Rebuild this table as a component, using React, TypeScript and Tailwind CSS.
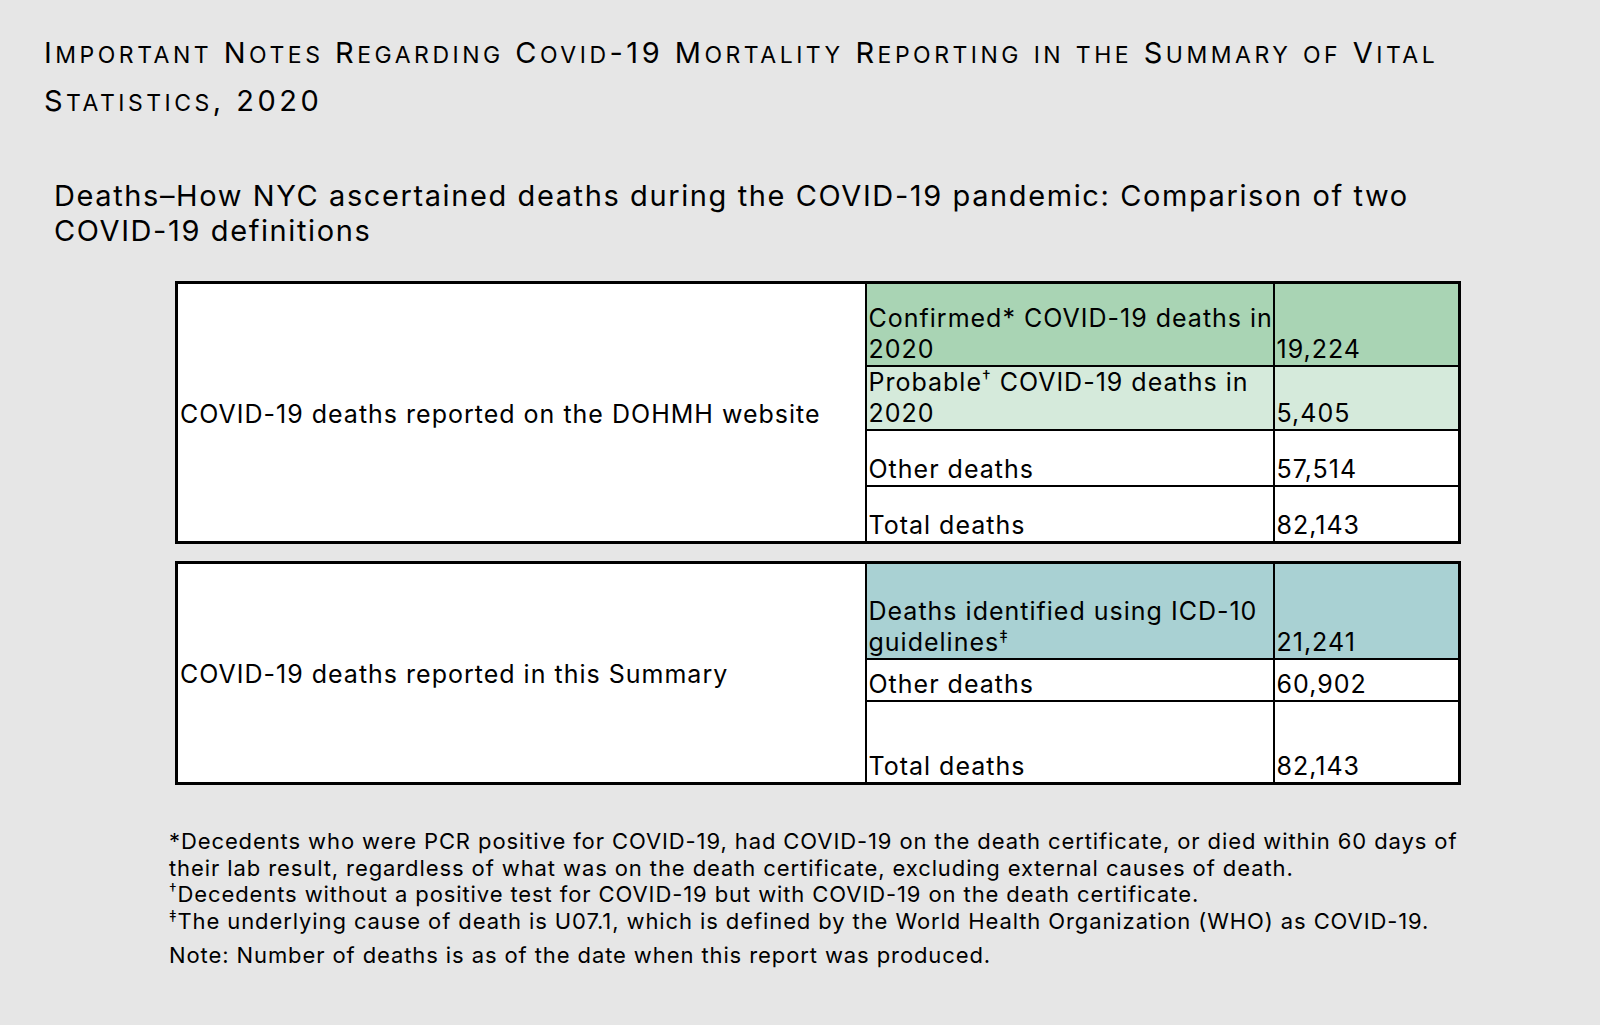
import React from "react";

const Sup = ({ c }: { c: string }) => (
  <span className="relative top-[-0.45em] text-[0.7em] leading-none">{c}</span>
);

function SmallCaps({ text }: { text: string }) {
  const parts: { small: boolean; s: string }[] = [];
  for (const ch of text) {
    const small = ch >= "a" && ch <= "z";
    const last = parts[parts.length - 1];
    if (last && last.small === small) last.s += ch;
    else parts.push({ small, s: ch });
  }
  return (
    <>
      {parts.map((p, i) =>
        p.small ? (
          <span key={i} className="text-[23px] uppercase">
            {p.s}
          </span>
        ) : (
          <span key={i}>{p.s}</span>
        )
      )}
    </>
  );
}

export default function App() {
  return (
    <div className="min-h-[1025px] w-[1600px] bg-[#e6e6e6] text-black font-['Inter','Noto_Sans',sans-serif] pl-[44px] pt-[30px]">
      <h1 className="text-[29px] leading-[46px] font-normal whitespace-nowrap tracking-[3.5px]">
        <SmallCaps text="Important Notes Regarding Covid-19 Mortality Reporting in the Summary of Vital" />
        <br />
        <SmallCaps text="Statistics, 2020" />
      </h1>

      <h2 className="mt-[52px] ml-[10px] text-[29px] leading-[35px] font-normal whitespace-nowrap tracking-[1.6px]">
        Deaths–How NYC ascertained deaths during the COVID-19 pandemic: Comparison of two
        <br />
        COVID-19 definitions
      </h2>

      <div className="mt-[33px] ml-[131px] flex flex-col gap-[17px] text-[25px] leading-[31px] tracking-[1px]">
        <table className="border-collapse border-[3px] border-black bg-white w-[1283px] table-fixed">
          <colgroup>
            <col className="w-[689px]" />
            <col className="w-[408px]" />
            <col className="w-[186px]" />
          </colgroup>
          <tbody>
            <tr className="h-[83px]">
              <td rowSpan={4} className="border-2 border-black align-middle pl-[2px] pt-[4px] whitespace-nowrap">
                COVID-19 deaths reported on the DOHMH website
              </td>
              <td className="border-2 border-black bg-[#a9d4b4] align-bottom pl-[2px] whitespace-nowrap">
                Confirmed* COVID-19 deaths in
                <br />
                2020
              </td>
              <td className="border-2 border-black bg-[#a9d4b4] align-bottom pl-[2px]">19,224</td>
            </tr>
            <tr className="h-[64px]">
              <td className="border-2 border-black bg-[#d5eadb] align-bottom pl-[2px] whitespace-nowrap">
                Probable<Sup c="†" /> COVID-19 deaths in
                <br />
                2020
              </td>
              <td className="border-2 border-black bg-[#d5eadb] align-bottom pl-[2px]">5,405</td>
            </tr>
            <tr className="h-[56px]">
              <td className="border-2 border-black align-bottom pl-[2px]">Other deaths</td>
              <td className="border-2 border-black align-bottom pl-[2px]">57,514</td>
            </tr>
            <tr className="h-[57px]">
              <td className="border-2 border-black align-bottom pl-[2px]">Total deaths</td>
              <td className="border-2 border-black align-bottom pl-[2px]">82,143</td>
            </tr>
          </tbody>
        </table>

        <table className="border-collapse border-[3px] border-black bg-white w-[1283px] table-fixed">
          <colgroup>
            <col className="w-[689px]" />
            <col className="w-[408px]" />
            <col className="w-[186px]" />
          </colgroup>
          <tbody>
            <tr className="h-[96px]">
              <td rowSpan={3} className="border-2 border-black align-middle pl-[2px] pt-[2px] whitespace-nowrap">
                COVID-19 deaths reported in this Summary
              </td>
              <td className="border-2 border-black bg-[#a9d1d3] align-bottom pl-[2px] whitespace-nowrap">
                Deaths identified using ICD-10
                <br />
                guidelines<Sup c="‡" />
              </td>
              <td className="border-2 border-black bg-[#a9d1d3] align-bottom pl-[2px]">21,241</td>
            </tr>
            <tr className="h-[42px]">
              <td className="border-2 border-black align-bottom pl-[2px]">Other deaths</td>
              <td className="border-2 border-black align-bottom pl-[2px]">60,902</td>
            </tr>
            <tr className="h-[83px]">
              <td className="border-2 border-black align-bottom pl-[2px]">Total deaths</td>
              <td className="border-2 border-black align-bottom pl-[2px]">82,143</td>
            </tr>
          </tbody>
        </table>
      </div>

      <div className="mt-[43px] ml-[125px] text-[22px] leading-[26.5px] whitespace-nowrap tracking-[0.9px]">
        <p>
          *Decedents who were PCR positive for COVID-19, had COVID-19 on the death certificate, or died within 60 days of
          <br />
          their lab result, regardless of what was on the death certificate, excluding external causes of death.
        </p>
        <p>
          <Sup c="†" />Decedents without a positive test for COVID-19 but with COVID-19 on the death certificate.
        </p>
        <p>
          <Sup c="‡" />The underlying cause of death is U07.1, which is defined by the World Health Organization (WHO) as COVID-19.
        </p>
        <p className="mt-[8px]">Note: Number of deaths is as of the date when this report was produced.</p>
      </div>
    </div>
  );
}
